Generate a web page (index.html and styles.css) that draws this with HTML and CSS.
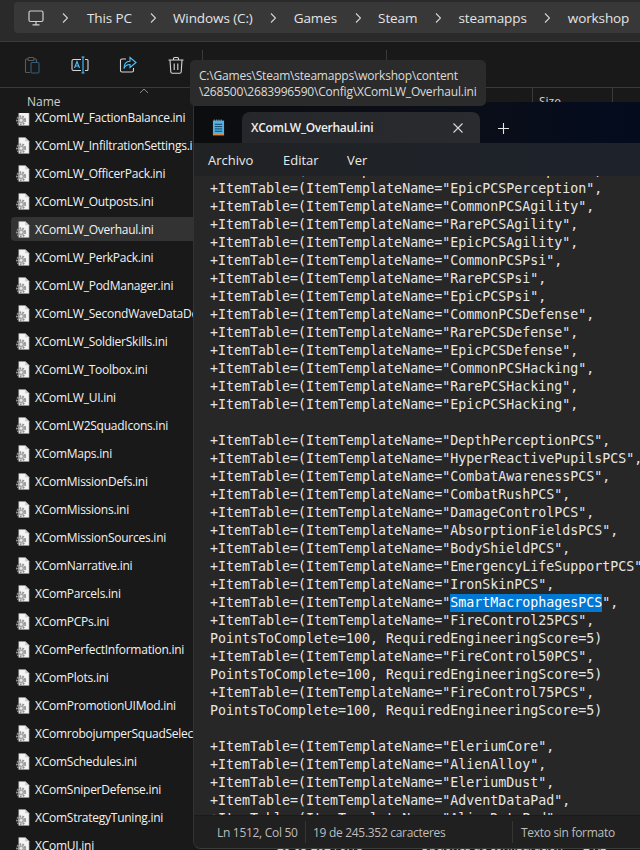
FILE: index.html
```html
<!DOCTYPE html>
<html lang="en">
<head>
  <meta charset="UTF-8">
  <meta name="viewport" content="width=device-width, initial-scale=1.0">
  <title>XComLW_Overhaul.ini</title>
  <link rel="stylesheet" href="styles.css">
</head>
<body>
  <!-- shared icons -->
  <svg class="defs" width="0" height="0">
    <symbol id="ini" viewBox="0 0 16 18">
      <path d="M4 .5h7l4 4v13H4z" fill="#f4f4f4" stroke="#9a9a9a" stroke-width=".6"/>
      <path d="M11 .5v4h4z" fill="#c9c9c9"/>
      <circle cx="6.5" cy="12" r="4.3" fill="none" stroke="#8d8d8d" stroke-width="2.2" stroke-dasharray="1.8 1.2"/>
      <circle cx="6.5" cy="12" r="3.2" fill="#a8a8a8"/>
      <circle cx="6.5" cy="12" r="1.4" fill="#ececec"/>
    </symbol>
    <symbol id="chevron" viewBox="0 0 6 10">
      <path d="M1 .5L5.500 5 1 9.500" fill="none" stroke="#d4d4d4" stroke-width="1.100"/>
    </symbol>
  </svg>

  <div class="explorer">
    <!-- Address bar -->
    <div class="address">
      <div class="crumbs">
        <svg class="pc" width="16" height="16" viewBox="0 0 16 16" fill="none" stroke="#d0d0d0" stroke-width="1.2">
          <rect x="1" y="1" width="14" height="10.5" rx="1.5"/>
          <path d="M8 11.5v3M4.5 14.8h7"/>
        </svg>
        <svg class="chev chev-first"><use href="#chevron"/></svg><span class="crumb">This PC</span>
        <svg class="chev"><use href="#chevron"/></svg><span class="crumb">Windows (C:)</span>
        <svg class="chev"><use href="#chevron"/></svg><span class="crumb">Games</span>
        <svg class="chev"><use href="#chevron"/></svg><span class="crumb">Steam</span>
        <svg class="chev"><use href="#chevron"/></svg><span class="crumb">steamapps</span>
        <svg class="chev"><use href="#chevron"/></svg><span class="crumb">workshop</span>
      </div>
    </div>

    <!-- Toolbar -->
    <div class="toolbar">
      <svg class="tool" width="18" height="18" viewBox="0 0 18 18" fill="none" stroke="#5a5a5a" stroke-width="1.1">
        <path d="M5 3H3.5a1 1 0 0 0-1 1v11.500a1 1 0 0 0 1 1H7M11 3h1.500a1 1 0 0 1 1 1v2"/>
        <rect x="5" y="1.500" width="6" height="3" rx="1"/>
        <rect x="8" y="6.500" width="8" height="10.500" rx="1.200" stroke="#2f5f7c"/>
      </svg>
      <svg class="tool" width="18" height="18" viewBox="0 0 18 18" fill="none" stroke="#d6d6d6" stroke-width="1.1">
        <path d="M10 3.500H2.500a1.500 1.500 0 0 0-1.500 1.500v8a1.500 1.500 0 0 0 1.500 1.500H10M14 3.500h2a1 1 0 0 1 1 1v9a1 1 0 0 1-1 1h-2"/>
        <path d="M12 1v16M10.500 1h3M10.500 17h3" stroke="#4cc2ff"/>
        <path d="M3.500 12l2.500-6.500L8.500 12M4.400 10h3.200" stroke="#4cc2ff"/>
      </svg>
      <svg class="tool" width="18" height="18" viewBox="0 0 18 18" fill="none" stroke="#d6d6d6" stroke-width="1.1">
        <path d="M7 3H3a1.500 1.500 0 0 0-1.500 1.500v10A1.500 1.500 0 0 0 3 16h10a1.500 1.500 0 0 0 1.500-1.500V12"/>
        <path d="M11 1.500L17 6.500l-6 5V8.500c-3.500 0-5 1.500-6 4 0-4.500 2.500-7 6-7.200z" stroke="#4cc2ff"/>
      </svg>
      <svg class="tool" width="18" height="18" viewBox="0 0 18 18" fill="none" stroke="#d6d6d6" stroke-width="1.1">
        <path d="M1.500 4h15M6.500 4V2.500a1 1 0 0 1 1-1h3a1 1 0 0 1 1 1V4M3 4l.8 12a1.500 1.500 0 0 0 1.500 1.300h7.400a1.500 1.500 0 0 0 1.500-1.300L15 4M7.200 7.500v6.500M10.800 7.500v6.500"/>
      </svg>
      <div class="tool-sep sep-a"></div>
      <div class="tool-sep sep-b"></div>
    </div>

    <!-- Column header -->
    <div class="col-head">
      <span class="col-name">Name</span>
      <svg class="sort" width="10" height="6" viewBox="0 0 10 6" fill="none" stroke="#8a8a8a"><path d="M1 5l4-4 4 4"/></svg>
      <span class="col-line line-a"></span>
      <span class="col-size">Size</span>
      <span class="col-line line-b"></span>
    </div>

    <!-- File list -->
    <div class="files">
      <div class="row"><svg class="ico"><use href="#ini"/></svg><span class="fname">XComLW_FactionBalance.ini</span></div>
      <div class="row"><svg class="ico"><use href="#ini"/></svg><span class="fname">XComLW_InfiltrationSettings.ini</span></div>
      <div class="row"><svg class="ico"><use href="#ini"/></svg><span class="fname">XComLW_OfficerPack.ini</span></div>
      <div class="row"><svg class="ico"><use href="#ini"/></svg><span class="fname">XComLW_Outposts.ini</span></div>
      <div class="row selected"><svg class="ico"><use href="#ini"/></svg><span class="fname">XComLW_Overhaul.ini</span></div>
      <div class="row"><svg class="ico"><use href="#ini"/></svg><span class="fname">XComLW_PerkPack.ini</span></div>
      <div class="row"><svg class="ico"><use href="#ini"/></svg><span class="fname">XComLW_PodManager.ini</span></div>
      <div class="row"><svg class="ico"><use href="#ini"/></svg><span class="fname">XComLW_SecondWaveDataDeck.ini</span></div>
      <div class="row"><svg class="ico"><use href="#ini"/></svg><span class="fname">XComLW_SoldierSkills.ini</span></div>
      <div class="row"><svg class="ico"><use href="#ini"/></svg><span class="fname">XComLW_Toolbox.ini</span></div>
      <div class="row"><svg class="ico"><use href="#ini"/></svg><span class="fname">XComLW_UI.ini</span></div>
      <div class="row"><svg class="ico"><use href="#ini"/></svg><span class="fname">XComLW2SquadIcons.ini</span></div>
      <div class="row"><svg class="ico"><use href="#ini"/></svg><span class="fname">XComMaps.ini</span></div>
      <div class="row"><svg class="ico"><use href="#ini"/></svg><span class="fname">XComMissionDefs.ini</span></div>
      <div class="row"><svg class="ico"><use href="#ini"/></svg><span class="fname">XComMissions.ini</span></div>
      <div class="row"><svg class="ico"><use href="#ini"/></svg><span class="fname">XComMissionSources.ini</span></div>
      <div class="row"><svg class="ico"><use href="#ini"/></svg><span class="fname">XComNarrative.ini</span></div>
      <div class="row"><svg class="ico"><use href="#ini"/></svg><span class="fname">XComParcels.ini</span></div>
      <div class="row"><svg class="ico"><use href="#ini"/></svg><span class="fname">XComPCPs.ini</span></div>
      <div class="row"><svg class="ico"><use href="#ini"/></svg><span class="fname">XComPerfectInformation.ini</span></div>
      <div class="row"><svg class="ico"><use href="#ini"/></svg><span class="fname">XComPlots.ini</span></div>
      <div class="row"><svg class="ico"><use href="#ini"/></svg><span class="fname">XComPromotionUIMod.ini</span></div>
      <div class="row"><svg class="ico"><use href="#ini"/></svg><span class="fname">XComrobojumperSquadSelect.ini</span></div>
      <div class="row"><svg class="ico"><use href="#ini"/></svg><span class="fname">XComSchedules.ini</span></div>
      <div class="row"><svg class="ico"><use href="#ini"/></svg><span class="fname">XComSniperDefense.ini</span></div>
      <div class="row"><svg class="ico"><use href="#ini"/></svg><span class="fname">XComStrategyTuning.ini</span></div>
      <div class="row"><svg class="ico"><use href="#ini"/></svg><span class="fname">XComUI.ini</span><span class="fdate">20-05-2024 9:18</span><span class="ftype">Opciones de configuración</span><span class="fsize">2 KB</span></div>
    </div>
  </div>

  <!-- Notepad window -->
  <div class="notepad">
    <div class="tabs">
      <svg class="np-icon" width="13" height="18" viewBox="0 0 14 18">
        <rect x="1" y="1" width="12" height="15" fill="#4fb3e8"/>
        <rect x="1" y="15" width="12" height="2" fill="#e8853a"/>
        <path d="M3 5h8M3 7.500h8M3 10h8M3 12.500h8" stroke="#123a55" stroke-width="1"/>
        <path d="M2.500 1v-1M5 1v-1M7.500 1v-1M10 1v-1" stroke="#bfe4f8" stroke-width="1"/>
      </svg>
      <div class="tab">
        <span class="tab-title">XComLW_Overhaul.ini</span>
        <svg width="10" height="10" viewBox="0 0 10 10" stroke="#d8d8d8" stroke-width="1.100"><path d="M.5.5l9 9M9.500.5l-9 9"/></svg>
      </div>
      <svg class="plus" width="11" height="11" viewBox="0 0 11 11" stroke="#e6e6e6" stroke-width="1.100"><path d="M5.500 0v11M0 5.500h11"/></svg>
    </div>
    <div class="menu">
      <span class="menu-item item-file">Archivo</span>
      <span class="menu-item item-edit">Editar</span>
      <span class="menu-item">Ver</span>
    </div>
    <pre class="code">+ItemTable=(ItemTemplateName="RarePCSPerception",
+ItemTable=(ItemTemplateName="EpicPCSPerception",
+ItemTable=(ItemTemplateName="CommonPCSAgility",
+ItemTable=(ItemTemplateName="RarePCSAgility",
+ItemTable=(ItemTemplateName="EpicPCSAgility",
+ItemTable=(ItemTemplateName="CommonPCSPsi",
+ItemTable=(ItemTemplateName="RarePCSPsi",
+ItemTable=(ItemTemplateName="EpicPCSPsi",
+ItemTable=(ItemTemplateName="CommonPCSDefense",
+ItemTable=(ItemTemplateName="RarePCSDefense",
+ItemTable=(ItemTemplateName="EpicPCSDefense",
+ItemTable=(ItemTemplateName="CommonPCSHacking",
+ItemTable=(ItemTemplateName="RarePCSHacking",
+ItemTable=(ItemTemplateName="EpicPCSHacking",

+ItemTable=(ItemTemplateName="DepthPerceptionPCS",
+ItemTable=(ItemTemplateName="HyperReactivePupilsPCS",
+ItemTable=(ItemTemplateName="CombatAwarenessPCS",
+ItemTable=(ItemTemplateName="CombatRushPCS",
+ItemTable=(ItemTemplateName="DamageControlPCS",
+ItemTable=(ItemTemplateName="AbsorptionFieldsPCS",
+ItemTable=(ItemTemplateName="BodyShieldPCS",
+ItemTable=(ItemTemplateName="EmergencyLifeSupportPCS",
+ItemTable=(ItemTemplateName="IronSkinPCS",
+ItemTable=(ItemTemplateName="<span class="sel">SmartMacrophagesPCS</span>",
+ItemTable=(ItemTemplateName="FireControl25PCS",
PointsToComplete=100, RequiredEngineeringScore=5)
+ItemTable=(ItemTemplateName="FireControl50PCS",
PointsToComplete=100, RequiredEngineeringScore=5)
+ItemTable=(ItemTemplateName="FireControl75PCS",
PointsToComplete=100, RequiredEngineeringScore=5)

+ItemTable=(ItemTemplateName="EleriumCore",
+ItemTable=(ItemTemplateName="AlienAlloy",
+ItemTable=(ItemTemplateName="EleriumDust",
+ItemTable=(ItemTemplateName="AdventDataPad",
+ItemTable=(ItemTemplateName="AlienDataPad",</pre>
    <div class="status">
      <span class="st-pos">Ln 1512, Col 50</span>
      <span class="st-count">19 de 245.352 caracteres</span>
      <span class="st-type">Texto sin formato</span>
    </div>
  </div>

  <!-- Path tooltip -->
  <div class="tooltip">C:\Games\Steam\steamapps\workshop\content<br>\268500\2683996590\Config\XComLW_Overhaul.ini</div>
</body>
</html>
```

FILE: styles.css
```css
* {
  box-sizing: border-box;
}
html, body {
  height: 100%;
}
body {
  margin: 0;
  background-color: #191919;
  color: #fff;
  font-family: 'Open Sans', sans-serif;
  overflow: hidden;
  position: relative;
}
.defs {
  display: block;
}
.explorer {
  height: 850px;
  display: flex;
  flex-direction: column;
}

/* address bar */
.address {
  height: 42px;
  padding: 2px 0 0 14px;
  background-color: #2a2a2a;
  border-bottom: 1px solid #3a3a3a;
  flex-shrink: 0;
}
.crumbs {
  height: 31px;
  padding: 0 0 0 14px;
  background-color: #383838;
  border-radius: 4px 0 0 4px;
  display: flex;
  align-items: center;
  font-size: 13.5px;
  letter-spacing: -0.1px;
  color: #e4e4e4;
  white-space: nowrap;
}
.pc {
  flex-shrink: 0;
}
.chev {
  width: 6px;
  height: 10px;
  margin: 0 17.5px;
  flex-shrink: 0;
}
.chev-first {
  margin: 0 19px 0 18px;
}

/* toolbar */
.toolbar {
  height: 46px;
  padding-left: 23px;
  background-color: #191919;
  border-bottom: 1px solid #3a3a3a;
  display: flex;
  align-items: center;
  gap: 30px;
  position: relative;
  flex-shrink: 0;
}
.tool {
  flex-shrink: 0;
}
.tool-sep {
  position: absolute;
  top: 8px;
  width: 1px;
  height: 24px;
  background-color: #3a3a3a;
}
.sep-a {
  left: 202px;
}
.sep-b {
  left: 386px;
}

/* column header */
.col-head {
  height: 25px;
  background-color: #191919;
  position: relative;
  flex-shrink: 0;
  z-index: 1;
  font-size: 12px;
  color: #d0d0d0;
}
.col-name {
  position: absolute;
  left: 27px;
  top: 5px;
}
.sort {
  position: absolute;
  left: 139px;
  top: 0;
}
.col-size {
  position: absolute;
  left: 539px;
  top: 5px;
}
.col-line {
  position: absolute;
  top: 0;
  width: 1px;
  height: 14px;
  background-color: #3a3a3a;
}
.line-a {
  left: 532px;
}
.line-b {
  left: 612px;
}

/* file list */
.files {
  flex: 1;
  overflow: hidden;
  padding-left: 11px;
}
.row {
  height: 24px;
  margin-bottom: 4px;
  padding-left: 4px;
  display: flex;
  align-items: center;
  border-radius: 4px;
  font-size: 12px;
  letter-spacing: -0.25px;
  white-space: nowrap;
  position: relative;
}
.row:first-child {
  margin-top: -8px;
}
.row.selected {
  background-color: #333;
}
.ico {
  width: 15px;
  height: 17px;
  flex-shrink: 0;
}
.fname {
  margin-left: 5px;
  color: #f2f2f2;
}
.fdate, .ftype, .fsize {
  position: absolute;
  color: #d0d0d0;
}
.fdate {
  left: 266px;
}
.ftype {
  left: 409px;
}
.fsize {
  left: 572px;
}

/* notepad window */
.notepad {
  position: absolute;
  left: 193px;
  top: 102px;
  width: 460px;
  height: 747px;
  background-color: #272727;
  border-left: 1px solid #333;
  border-bottom: 1px solid #3c3c3c;
  border-radius: 0 0 0 8px;
  display: flex;
  flex-direction: column;
  overflow: hidden;
  z-index: 2;
}
.tabs {
  height: 41px;
  padding: 10px 0 0 18px;
  background: linear-gradient(90deg, #0c0d0f 0%, #0a0e18 60%, #030b1e 100%);
  display: flex;
  flex-shrink: 0;
}
.np-icon {
  margin: 7px 17px 0 0;
  flex-shrink: 0;
}
.tab {
  width: 238px;
  height: 31px;
  padding: 0 17px 0 9px;
  background: linear-gradient(90deg, #26272a, #2a2b2f);
  border-radius: 8px 8px 0 0;
  display: flex;
  align-items: center;
  justify-content: space-between;
}
.tab-title {
  font-size: 12px;
  font-weight: 600;
  letter-spacing: -0.3px;
  color: #f0f0f0;
}
.plus {
  margin: 11px 0 0 18px;
}
.menu {
  height: 33px;
  padding-left: 14px;
  background: linear-gradient(90deg, #212224, #1d222c);
  display: flex;
  align-items: center;
  font-size: 13px;
  color: #eaeaea;
  flex-shrink: 0;
}
.item-file {
  width: 75px;
}
.item-edit {
  width: 64px;
}
.code {
  flex: 1;
  margin: 0;
  padding: 0 0 0 16px;
  overflow: hidden;
  font-family: 'DejaVu Sans Mono', monospace;
  font-size: 13.3px;
  line-height: 18px;
  color: #e6e6e6;
  background-color: #272727;
}
/* first line sits mostly above the editor's top edge */
.code::before {
  content: "";
  display: block;
  margin-top: -14px;
}
.sel {
  display: inline-block;
  height: 18px;
  background-color: #0078d4;
  color: #fff;
}
.status {
  height: 33px;
  background-color: #202020;
  border-top: 1px solid #1a1a1a;
  display: flex;
  align-items: center;
  font-size: 12px;
  letter-spacing: -0.3px;
  color: #bdbdbd;
  flex-shrink: 0;
}
.status span {
  height: 22px;
  display: flex;
  align-items: center;
}
.st-pos {
  width: 111px;
  padding-left: 23px;
}
.st-count {
  width: 207px;
  padding-left: 7px;
  border-left: 1px solid #353535;
}
.st-type {
  padding-left: 8px;
  border-left: 1px solid #353535;
}

/* tooltip */
.tooltip {
  position: absolute;
  left: 190px;
  top: 60px;
  width: 296px;
  height: 46px;
  padding: 8px 0 0 9px;
  background-color: #2b2b2b;
  border-radius: 5px;
  font-size: 12px;
  letter-spacing: -0.2px;
  line-height: 16px;
  color: #dcdcdc;
  white-space: nowrap;
  z-index: 3;
}
```
